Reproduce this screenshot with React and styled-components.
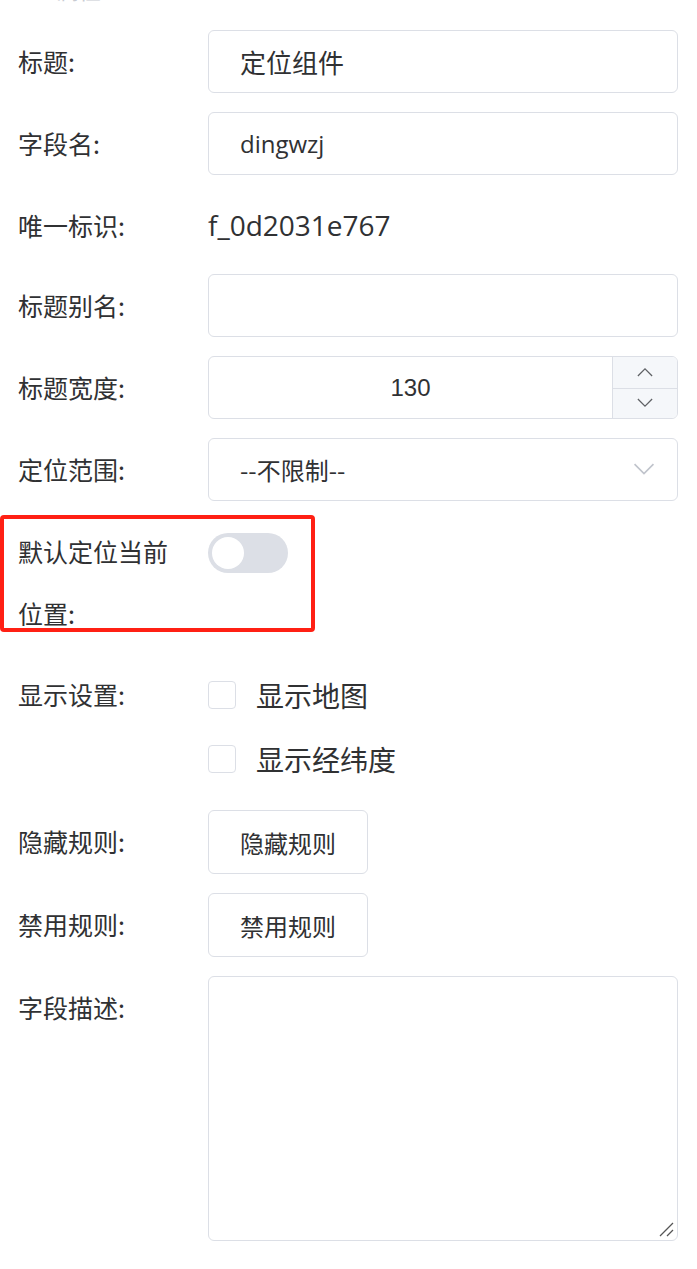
import styled, { createGlobalStyle } from "styled-components";

const GlobalStyle = createGlobalStyle`
  body {
    margin: 0;
    background: #fff;
    font-family: "Open Sans", "Noto Sans CJK SC", sans-serif;
    color: #303133;
  }
`;

const Page = styled.div`
  width: 697px;
  overflow: hidden;
`;

const Heading = styled.div`
  margin: -22px 0 0 57px;
  height: 24px;
  font-size: 22px;
  line-height: 24px;
  color: #c8cbd2;
`;

const Form = styled.div`
  padding: 28px 19px 0 18px;
`;

const Item = styled.div`
  position: relative;
  display: grid;
  grid-template-columns: 190px 1fr;
  margin-bottom: ${(p) => (p.compact ? "17px" : "19px")};
`;

const Label = styled.div`
  font-family: "Noto Sans CJK SC", sans-serif;
  font-size: 25px;
  line-height: ${(p) => (p.tall ? "62px" : "63px")};
  padding-right: 30px;
  color: #303133;
`;

const Marker = styled.div`
  position: absolute;
  left: -18px;
  top: -5px;
  width: 315px;
  height: 117px;
  box-sizing: border-box;
  border: 4px solid #ff2014;
  border-radius: 4px;
  pointer-events: none;
`;

const Input = styled.div`
  box-sizing: border-box;
  height: 63px;
  border: 1.5px solid #dcdfe6;
  border-radius: 6px;
  padding-left: 31px;
  display: flex;
  align-items: center;
  font-family: ${(p) => (p.cjk ? '"Noto Sans CJK SC", sans-serif' : "inherit")};
  font-size: ${(p) => (p.cjk ? "26px" : "24px")};
  color: #303133;
`;

const Text = styled.div`
  font-size: 28px;
  line-height: 63px;
  color: #303133;
`;

const NumberBox = styled.div`
  box-sizing: border-box;
  height: 63px;
  border: 1.5px solid #dcdfe6;
  border-radius: 6px;
  display: grid;
  grid-template-columns: 1fr 65px;
  overflow: hidden;
`;

const NumberValue = styled.div`
  display: flex;
  align-items: center;
  justify-content: center;
  font-family: "Liberation Sans", sans-serif;
  font-size: 24px;
`;

const Spinner = styled.div`
  display: grid;
  grid-template-rows: 1fr 1fr;
  border-left: 1.5px solid #dcdfe6;
  background: #f5f7fa;
`;

const SpinButton = styled.div`
  display: flex;
  align-items: center;
  justify-content: center;
  & + & {
    border-top: 1.5px solid #dcdfe6;
  }
`;

const Select = styled(Input)`
  justify-content: space-between;
  padding-right: 22px;
  font-family: "Noto Sans CJK SC", sans-serif;
`;

const Switch = styled.div`
  margin-top: 13px;
  width: 80px;
  height: 40px;
  border-radius: 20px;
  background: #dcdfe6;
  position: relative;
`;

const Knob = styled.div`
  position: absolute;
  top: 4px;
  left: 4px;
  width: 32px;
  height: 32px;
  border-radius: 50%;
  background: #fff;
`;

const CheckList = styled.div`
  display: flex;
  flex-direction: column;
`;

const CheckRow = styled.label`
  display: flex;
  align-items: center;
  gap: 20px;
  height: 64px;
  font-family: "Noto Sans CJK SC", sans-serif;
  font-size: 28px;
  color: #303133;
`;

const Box = styled.span`
  box-sizing: border-box;
  width: 28px;
  height: 28px;
  border: 1.5px solid #dcdfe6;
  border-radius: 4px;
  background: #fff;
`;

const Button = styled.div`
  box-sizing: border-box;
  width: 160px;
  height: 64px;
  border: 1.5px solid #dcdfe6;
  border-radius: 6px;
  display: flex;
  align-items: center;
  justify-content: center;
  font-family: "Noto Sans CJK SC", sans-serif;
  font-size: 24px;
  color: #303133;
`;

const TextArea = styled.div`
  position: relative;
  box-sizing: border-box;
  height: 265px;
  border: 1.5px solid #dcdfe6;
  border-radius: 6px;
`;

const Grip = styled.svg`
  position: absolute;
  right: 3px;
  bottom: 3px;
`;

const Chevron = ({ dir = "down", color = "#606266", size = 18 }) => (
  <svg width={size} height={size / 2 + 2} viewBox="0 0 18 11" fill="none">
    <path
      d={dir === "up" ? "M1 10 L9 2 L17 10" : "M1 1 L9 9 L17 1"}
      stroke={color}
      strokeWidth="1.4"
    />
  </svg>
);

const App = () => {
  return (
    <Page>
      <GlobalStyle />
      <Heading>属性</Heading>
      <Form>
        <Item>
          <Label>标题:</Label>
          <Input cjk>定位组件</Input>
        </Item>
        <Item>
          <Label>字段名:</Label>
          <Input>dingwzj</Input>
        </Item>
        <Item compact>
          <Label>唯一标识:</Label>
          <Text>f_0d2031e767</Text>
        </Item>
        <Item>
          <Label>标题别名:</Label>
          <Input />
        </Item>
        <Item>
          <Label>标题宽度:</Label>
          <NumberBox>
            <NumberValue>130</NumberValue>
            <Spinner>
              <SpinButton>
                <Chevron dir="up" size={16} />
              </SpinButton>
              <SpinButton>
                <Chevron dir="down" size={16} />
              </SpinButton>
            </Spinner>
          </NumberBox>
        </Item>
        <Item>
          <Label>定位范围:</Label>
          <Select>
            <span>--不限制--</span>
            <Chevron color="#c0c4cc" size={22} />
          </Select>
        </Item>
        <Item>
          <Marker />
          <Label tall>默认定位当前位置:</Label>
          <div>
            <Switch>
              <Knob />
            </Switch>
          </div>
        </Item>
        <Item>
          <Label>显示设置:</Label>
          <CheckList>
            <CheckRow>
              <Box />
              显示地图
            </CheckRow>
            <CheckRow>
              <Box />
              显示经纬度
            </CheckRow>
          </CheckList>
        </Item>
        <Item>
          <Label>隐藏规则:</Label>
          <Button>隐藏规则</Button>
        </Item>
        <Item>
          <Label>禁用规则:</Label>
          <Button>禁用规则</Button>
        </Item>
        <Item>
          <Label>字段描述:</Label>
          <TextArea>
            <Grip width="16" height="16" viewBox="0 0 16 16">
              <path d="M2 15 L15 2 M9 15 L15 9" stroke="#555" strokeWidth="1.3" />
            </Grip>
          </TextArea>
        </Item>
      </Form>
    </Page>
  );
};

export default App;
